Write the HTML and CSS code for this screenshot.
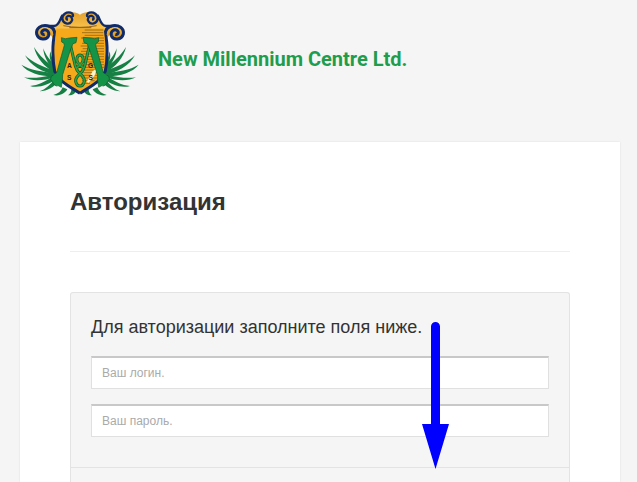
FILE: index.html
```
<!DOCTYPE html>
<html lang="ru">
<head>
    <meta charset="UTF-8">
    <meta name="viewport" content="width=device-width, initial-scale=1.0">
    <title>Авторизация</title>
    <link rel="stylesheet" href="styles.css">
</head>
<body>
    <header class="header">
        <svg class="logo" viewBox="30 30 360 264" aria-hidden="true">
            <defs>
                <linearGradient id="gold" x1="0" y1="0" x2="0" y2="1">
                    <stop offset="0" stop-color="#e3a02c"/>
                    <stop offset="0.55" stop-color="#f9c14a"/>
                    <stop offset="1" stop-color="#c98618"/>
                </linearGradient>
                <clipPath id="right-half">
                    <path d="M208 76H296C282 120 296 170 284 215C272 248 240 262 210 277Z"/>
                </clipPath>
                <g id="leaves">
                    <path d="M136 204C112 188 88 168 72 141C78 172 104 202 134 218Z"/>
                    <path d="M134 212C100 202 66 186 45 166C60 196 100 218 132 224Z"/>
                    <path d="M132 218C98 216 60 210 34 194C54 220 98 230 130 228Z"/>
                    <path d="M130 224C100 232 66 236 42 232C66 246 106 242 132 232Z"/>
                    <path d="M130 228C108 244 84 256 60 258C84 266 118 254 136 238Z"/>
                    <path d="M134 236C122 254 106 268 88 274C112 274 134 260 146 244Z"/>
                    <path d="M138 200C122 184 106 164 100 145C100 168 116 196 134 212Z"/>
                    <path d="M140 194C128 180 122 168 122 154C114 172 124 192 138 208Z"/>
                    <path d="M158 262C154 274 144 282 130 285C148 290 166 280 172 268Z"/>
                    <path d="M184 268C184 276 180 282 174 286C188 287 196 280 198 272Z"/>
                </g>
                <g id="scrolls">
                    <path fill="url(#gold)" d="M210 77V44C196 34 166 32 156 48C148 62 146 74 134 77C112 72 82 78 79 101C80 124 116 126 122 104L132 120L210 118Z"/>
                    <path class="navy" d="M104 103C97 105 92 98 98 92C107 85 119 94 116 106C111 122 85 120 80 102C77 84 94 74 112 77C128 80 135 88 134 104C126 130 128 184 134 213C146 246 184 262 210 280"/>
                    <path class="navy thin" d="M174 59C168 59 167 50 174 48C184 46 190 57 184 65C177 76 159 70 157 57C156 43 169 35 182 38C189 40 190 46 188 50M158 45C149 54 151 75 132 78H115"/>
                </g>
                <g id="letter-side">
                    <path d="M154 113Q166 119 178 114L201 112L198 128L189 131L181 150L158 224Q158 239 154 262Q143 254 138 258Q128 251 127 244Q118 239 124 229L140 218L163 136L162 130L155 126Z"/>
                </g>
                <path id="strand" d="M182 138L196 198Q200 212 210 222Q224 232 223 244Q220 258 210 258"/>
            </defs>
            <g fill="#168044">
                <use href="#leaves"/>
                <use href="#leaves" transform="matrix(-1 0 0 1 420 0)"/>
            </g>
            <path fill="#f7a91c" d="M130 78H290C282 120 296 170 284 213C272 247 238 262 210 280C180 262 148 247 136 213C124 170 138 120 130 78Z"/>
            <use href="#scrolls"/>
            <use href="#scrolls" transform="matrix(-1 0 0 1 420 0)"/>
            <path fill="#f7a91c" d="M139 86H281C286 120 288 170 280 208C270 240 236 254 210 271C184 254 150 240 140 208C132 170 134 120 139 86Z"/>
            <g clip-path="url(#right-half)">
                <path class="hatch" d="M224 90H280M216 98H280M224 106H280M213 114H282M222 122H282M216 130H282M212 138H282M218 146H282M213 154H282M218 162H282M214 170H282M218 178H282M214 186H282M218 194H282M214 202H282M218 210H278M214 218H272M218 226H268M214 234H264M216 242H254M214 250H240"/>
                <path fill="#fff4cc" d="M248 214L262 204L254 226L236 248L230 246Z"/>
            </g>
            <path class="shade" d="M160 77Q210 87 260 77M178 83H244"/>
            <g class="knot dark">
                <use href="#strand"/>
                <use href="#strand" transform="matrix(-1 0 0 1 420 0)"/>
                <path d="M200 204C214 192 222 186 219 174C216 162 204 162 201 174C198 186 206 192 220 204"/>
            </g>
            <g class="knot">
                <use href="#strand"/>
                <use href="#strand" transform="matrix(-1 0 0 1 420 0)"/>
                <path d="M200 204C214 192 222 186 219 174C216 162 204 162 201 174C198 186 206 192 220 204"/>
            </g>
            <g class="letter">
                <use href="#letter-side"/>
                <use href="#letter-side" transform="matrix(-1 0 0 1 420 0)"/>
            </g>
            <g class="initials">
                <text x="178" y="203">A</text>
                <text x="242" y="203">G</text>
                <text x="178" y="239">S</text>
                <text x="242" y="239">S</text>
            </g>
        </svg>
        <span class="brand">New Millennium Centre Ltd.</span>
    </header>

    <main class="content">
        <h1>Авторизация</h1>
        <form class="login">
            <div class="login-body">
                <h2>Для авторизации заполните поля ниже.</h2>
                <input type="text" class="field" name="login" placeholder="Ваш логин." aria-label="Ваш логин.">
                <input type="password" class="field" name="password" placeholder="Ваш пароль." aria-label="Ваш пароль.">
            </div>
            <div class="login-footer"></div>
            <svg class="arrow" viewBox="0 0 28 148" aria-hidden="true">
                <path d="M9 4.500A4.500 4.500 0 0 1 18 4.500V102H27L13.500 147L0 102H9Z"/>
            </svg>
        </form>
    </main>
</body>
</html>
```
FILE: styles.css
```
* { box-sizing: border-box; }
body { display: flex; flex-direction: column; min-height: 100vh; margin: 0; background-color: #f5f5f5; color: #333; font-family: Arial, "Liberation Sans", sans-serif; }
h1, h2 { margin: 0; }

.header { display: flex; align-items: center; padding: 10px 20px 44px; gap: 18px; }
.logo { width: 120px; height: 88px; flex: none; }
.navy { fill: none; stroke: #102b67; stroke-width: 9; stroke-linejoin: round; }
.thin { stroke-width: 7; }
.hatch { fill: none; stroke: #7a5414; stroke-width: 2; }
.shade { fill: none; stroke: #94621c; stroke-width: 3; }
.letter { fill: #159447; stroke: #0c5a2c; stroke-width: 2; }
.knot { fill: none; stroke: #2da044; stroke-width: 5; }
.dark { stroke: #0c5a2c; stroke-width: 9; }
.initials { fill: #2b210f; font-size: 20px; font-weight: bold; text-anchor: middle; }
.brand { padding-top: 10px; color: #1f9d4d; font-family: Roboto, sans-serif; font-size: 20px; font-weight: bold; line-height: 28px; white-space: nowrap; }

.content { display: flex; flex-direction: column; flex: 1; margin: 0 17px 0 20px; padding: 40px 50px 0; background-color: #fff; box-shadow: 0 0 2px rgba(0, 0, 0, 0.1); }
h1 { margin-bottom: 40px; padding: 4px 0 33px; border-bottom: 1px solid #eee; font-size: 24px; line-height: 32px; }

.login { position: relative; display: flex; flex-direction: column; flex: 1; border: 1px solid #e3e3e3; border-bottom: 0; border-radius: 3px 3px 0 0; background-color: #f5f5f5; }
.login-body { display: flex; flex-direction: column; gap: 15px; padding: 20px 20px 30px; }
h2 { font-size: 18px; font-weight: normal; line-height: 28px; }
.field { width: 100%; height: 33px; padding: 0 10px; border: 1px solid #e0e0e0; border-top: 2px solid #c8c8c8; border-radius: 0; background-color: #fff; color: #333; font-family: inherit; font-size: 12px; }
.field::placeholder { color: #aaa; }
.login-footer { flex: 1; border-top: 1px solid #e3e3e3; }
.arrow { position: absolute; top: 29px; left: 351px; width: 28px; height: 148px; fill: #00f; }
```
